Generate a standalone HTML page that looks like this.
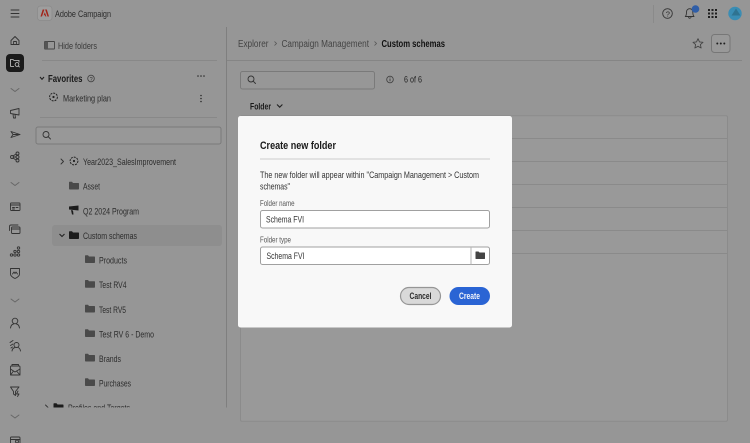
<!DOCTYPE html>
<html><head><meta charset="utf-8"><style>
html,body{margin:0;padding:0;background:#969696;width:750px;height:443px;overflow:hidden}
svg{display:block;filter:blur(.35px)}
text{font-family:"Liberation Sans",sans-serif;font-size:9.500px;fill:#2c2c2c}
.b{font-weight:bold;fill:#1a1a1a}
.i{fill:none;stroke:#333;stroke-width:.9;stroke-linecap:round;stroke-linejoin:round}
.f{fill:#4a4a4a}
.d{fill:#1c1c1c}
</style></head><body>
<svg width="750" height="443" viewBox="0 0 750 443" xmlns="http://www.w3.org/2000/svg">
<defs>
<path id="fo" d="M0 1Q0 .3.7.3H3L4 1.500H9.300Q10 1.500 10 2.200V7.300Q10 8 9.300 8H.7Q0 8 0 7.300Z"/>
<clipPath id="cl"><rect x="30" y="120" width="196" height="287.500"/></clipPath>
</defs>
<rect width="750" height="443" fill="#969696"/>

<!-- top bar -->
<path class="i" d="M11 10H19M11 13.500H19M11 17H19"/>
<rect x="37.500" y="6" width="14.500" height="14.500" rx="3" fill="#9e9e9e" stroke="#8a8a8a" stroke-width=".7"/>
<path d="M44.400 9.500H42.700L40.500 16.500H42ZM45.100 9.500H46.800L49 16.500H47.500ZM44.800 12.300L46.400 16.500H45.400L44.900 15.200H43.600Z" fill="#a3241a"/>
<text x="55" y="16.800" textLength="56" lengthAdjust="spacingAndGlyphs">Adobe Campaign</text>
<rect x="653" y="5" width="1" height="18" fill="#8a8a8a"/>
<circle class="i" cx="667.500" cy="13.500" r="4.800"/>
<text x="665.700" y="16.300" style="font-size:7.500px">?</text>
<path class="i" d="M685.300 16.500C686.500 15.500 686.500 14 686.500 12C686.500 10 688 8.700 689.700 8.700C691.400 8.700 692.800 10 692.800 12C692.800 14 693 15.500 694 16.500ZM688.500 17.500Q689.700 19 691 17.500"/>
<circle cx="695.500" cy="9" r="3.800" fill="#2f5ea8"/>
<g fill="#1f1f1f"><rect x="708" y="9" width="2" height="2"/><rect x="711.500" y="9" width="2" height="2"/><rect x="715" y="9" width="2" height="2"/><rect x="708" y="12.500" width="2" height="2"/><rect x="711.500" y="12.500" width="2" height="2"/><rect x="715" y="12.500" width="2" height="2"/><rect x="708" y="16" width="2" height="2"/><rect x="711.500" y="16" width="2" height="2"/><rect x="715" y="16" width="2" height="2"/></g>
<circle cx="735" cy="13.500" r="6.700" fill="#3a8db4"/>
<path d="M736 8.500L740.500 15.500H731.500Z" fill="#2f7391"/>

<!-- left nav -->
<path class="i" d="M11 40.500L15 36.500L19 40.500V44.500H11ZM13.600 44.500V41.500H16.400V44.500"/>
<rect x="6" y="54" width="18" height="18" rx="4" fill="#1b1b1b"/>
<path d="M10.500 66.500V59.500H13L14 60.500H19V62.500M10.500 66.500H14" fill="none" stroke="#cfcfcf" stroke-width=".8"/>
<circle cx="17" cy="64.500" r="1.900" fill="none" stroke="#cfcfcf" stroke-width=".8"/><path d="M18.400 66L19.600 67.200" stroke="#cfcfcf" stroke-width=".8"/>
<path class="i" style="stroke:#666" d="M11 88.500L15 91.500L19 88.500"/>
<path class="i" d="M10.500 110.500L19 108.500V115L10.500 113.500ZM13 114L13.500 118H15.500L15 114.500"/>
<path class="i" d="M11 131.500L20 134.500L11 137.500L13 134.500ZM13 134.500H20"/>
<g class="i"><circle cx="12" cy="157" r="1.500"/><circle cx="17.500" cy="153.500" r="1.500"/><circle cx="17.500" cy="157" r="1.500"/><circle cx="17.500" cy="160.500" r="1.500"/><path d="M13.500 157H16M13 156L16 154M13 158L16 160"/></g>
<path class="i" style="stroke:#666" d="M11 182.500L15 185.500L19 182.500"/>
<g class="i"><rect x="10.500" y="203" width="9.500" height="7.500" rx=".7"/><path d="M10.500 205H20M12.500 207.500H14.500M16 207.500H18M12.500 209H14.500"/></g>
<g class="i"><rect x="11.500" y="227" width="8.500" height="6.500" rx="1"/><path d="M9.500 230.500V226.500Q9.500 225 11 225H18M11.500 229H20"/></g>
<g class="i"><circle cx="11.500" cy="255" r="1.200"/><circle cx="15" cy="255" r="1.200"/><circle cx="18.500" cy="255" r="1.200"/><circle cx="15" cy="251.500" r="1.200"/><circle cx="18.500" cy="251.500" r="1.200"/><circle cx="18.500" cy="248" r="1.200"/></g>
<path class="i" d="M10.500 268.500H19.500V274Q19.500 276.500 15 278.500Q10.500 276.500 10.500 274ZM12.500 274L14 272L15 273.500L16 272L17.500 274"/>
<path class="i" style="stroke:#666" d="M11 299L15 302L19 299"/>
<g class="i"><circle cx="15" cy="321" r="2.800"/><path d="M10.500 328Q11 324.500 13.500 324M19.500 328Q19 324.500 16.500 324"/></g>
<g class="i"><circle cx="16.500" cy="345" r="2.500"/><path d="M12 351Q12.500 348 15 347.500M20.500 351Q20 348 18 347.500M10 342.500L13 340.500M10.500 345.500L13 344M11 348L12.500 347"/></g>
<g class="i"><rect x="10.500" y="366" width="9.500" height="9" rx="1"/><path d="M10.500 369L15 372L20 369M10.500 375L13.500 371M20 375L16.500 371M12 366V364.500H18.500V366"/></g>
<g class="i"><path d="M10.500 387H19L15.500 391.500V395.500L13.500 394V391.500Z"/><path d="M18 391L16.500 394H19L17.500 396.500"/></g>
<path class="i" style="stroke:#666" d="M11 415L15 418L19 415"/>
<g class="i"><rect x="10.500" y="437" width="9.500" height="9" rx="1"/><path d="M10.500 439.500H20"/><circle cx="17" cy="441.500" r="1.500"/></g>

<!-- folder column -->
<rect x="44.500" y="41.500" width="10" height="7.500" rx=".5" fill="none" stroke="#444" stroke-width=".9"/><rect x="44.500" y="41.500" width="3.500" height="7.500" fill="#555"/>
<text x="58" y="48.800" textLength="39" lengthAdjust="spacingAndGlyphs" style="fill:#3a3a3a">Hide folders</text>
<rect x="42" y="60" width="175" height="1" fill="#888"/>
<path d="M40 77L42 79.300L44 77" fill="none" stroke="#1f1f1f" stroke-width="1.100"/>
<text class="b" x="48" y="81.800" textLength="34.500" lengthAdjust="spacingAndGlyphs" style="font-size:10px">Favorites</text>
<circle class="i" style="stroke:#444" cx="91" cy="78.500" r="3.300"/>
<text x="89.600" y="80.800" style="font-size:5.500px">?</text>
<g fill="#2b2b2b"><circle cx="198" cy="76" r=".8"/><circle cx="201" cy="76" r=".8"/><circle cx="204" cy="76" r=".8"/></g>
<circle cx="53.500" cy="97" r="3.900" fill="none" stroke="#222" stroke-width="1" stroke-dasharray="2 1"/><circle cx="53.500" cy="97" r="1.100" fill="#222"/>
<text x="63" y="101.300" textLength="48" lengthAdjust="spacingAndGlyphs">Marketing plan</text>
<g fill="#2b2b2b"><circle cx="201" cy="95.500" r=".8"/><circle cx="201" cy="98.500" r=".8"/><circle cx="201" cy="101.500" r=".8"/></g>
<rect x="40" y="117" width="177" height="1" fill="#888"/>

<rect x="36" y="127" width="185" height="17" rx="2" fill="#989898" stroke="#7a7a7a" stroke-width="1"/>
<circle class="i" cx="46" cy="134.500" r="3"/><path class="i" d="M48.200 136.700L50.500 139"/>

<g clip-path="url(#cl)">
<rect x="52" y="225" width="170" height="21" rx="3" fill="#8e8e8e"/>
<path class="i" d="M61 159L63.500 161.500L61 164"/>
<circle cx="74" cy="161" r="3.900" fill="none" stroke="#222" stroke-width="1" stroke-dasharray="2 1"/><circle cx="74" cy="161" r="1.100" fill="#222"/>
<text x="83" y="165" textLength="93" lengthAdjust="spacingAndGlyphs">Year2023_SalesImprovement</text>
<use href="#fo" class="f" x="69" y="181.500"/>
<text x="83" y="189.500" textLength="17" lengthAdjust="spacingAndGlyphs">Asset</text>
<path class="d" d="M69 206.500L78.500 205.500V210.500L69 209.500ZM71 210L72 214.500H73.500L73 210.500Z"/>
<text x="83" y="214.300" textLength="56" lengthAdjust="spacingAndGlyphs">Q2 2024 Program</text>
<path d="M59.500 234L62 236.500L64.500 234" fill="none" stroke="#222" stroke-width="1.100"/>
<use href="#fo" class="d" x="69" y="231"/>
<text x="83" y="239" textLength="54" lengthAdjust="spacingAndGlyphs">Custom schemas</text>
<use href="#fo" class="f" x="85" y="255"/>
<text x="99" y="263.500" textLength="28" lengthAdjust="spacingAndGlyphs">Products</text>
<use href="#fo" class="f" x="85" y="279.700"/>
<text x="99" y="288" textLength="27.500" lengthAdjust="spacingAndGlyphs">Test RV4</text>
<use href="#fo" class="f" x="85" y="304.500"/>
<text x="99" y="313" textLength="27" lengthAdjust="spacingAndGlyphs">Test RV5</text>
<use href="#fo" class="f" x="85" y="329"/>
<text x="99" y="337.500" textLength="55" lengthAdjust="spacingAndGlyphs">Test RV 6 - Demo</text>
<use href="#fo" class="f" x="85" y="353.500"/>
<text x="99" y="362" textLength="22" lengthAdjust="spacingAndGlyphs">Brands</text>
<use href="#fo" class="f" x="85" y="378"/>
<text x="99" y="386.500" textLength="32" lengthAdjust="spacingAndGlyphs">Purchases</text>
<path class="i" d="M45.500 405L48 407.500L45.500 410"/>
<use href="#fo" class="d" x="53.500" y="403"/>
<text x="68" y="411" textLength="62" lengthAdjust="spacingAndGlyphs">Profiles and Targets</text>
</g>
<rect x="226" y="27" width="1" height="380.500" fill="#7f7f7f"/>

<!-- content -->
<rect x="227" y="60" width="515" height="1" fill="#858585"/>
<text x="238" y="47" textLength="30.500" lengthAdjust="spacingAndGlyphs" style="fill:#444;font-size:10px">Explorer</text>
<path d="M274.500 41.500L276.500 43.500L274.500 45.500" fill="none" stroke="#555" stroke-width=".8"/>
<text x="281.500" y="47" textLength="87.500" lengthAdjust="spacingAndGlyphs" style="fill:#444;font-size:10px">Campaign Management</text>
<path d="M374.500 41.500L376.500 43.500L374.500 45.500" fill="none" stroke="#555" stroke-width=".8"/>
<text class="b" x="381.500" y="47" textLength="63.500" lengthAdjust="spacingAndGlyphs" style="font-size:10px;fill:#111">Custom schemas</text>
<path class="i" style="stroke:#444" d="M698 38.700L699.500 41.900L703 42.300L700.400 44.600L701.100 48L698 46.300L694.900 48L695.600 44.600L693 42.300L696.500 41.900Z"/>
<rect x="711.500" y="34.500" width="18.500" height="18" rx="3" fill="#999" stroke="#777" stroke-width="1"/>
<g fill="#1f1f1f"><circle cx="717.300" cy="43.500" r="1"/><circle cx="720.800" cy="43.500" r="1"/><circle cx="724.300" cy="43.500" r="1"/></g>
<rect x="240.500" y="71.500" width="134" height="17.500" rx="2" fill="#979797" stroke="#7a7a7a" stroke-width="1"/>
<circle class="i" cx="251" cy="79" r="3"/><path class="i" d="M253.200 81.200L255.500 83.500"/>
<circle class="i" style="stroke:#444" cx="390" cy="79.500" r="3.300"/><path d="M390 78.500V81.300" stroke="#333" stroke-width=".8"/><circle cx="390" cy="77.500" r=".4" fill="#333"/>
<text x="404" y="82.500" textLength="18" lengthAdjust="spacingAndGlyphs" style="fill:#222">6 of 6</text>
<text class="b" x="250" y="109.500" textLength="21" lengthAdjust="spacingAndGlyphs">Folder</text>
<path d="M277 104.500L279.700 107.200L282.400 104.500" fill="none" stroke="#222" stroke-width="1.100"/>

<rect x="240.500" y="115.800" width="487" height="305.400" rx="1.500" fill="#999" stroke="#8b8b8b" stroke-width="1"/>
<g fill="#8a8a8a"><rect x="241" y="138" width="486" height="1"/><rect x="241" y="161" width="486" height="1"/><rect x="241" y="184" width="486" height="1"/><rect x="241" y="207" width="486" height="1"/><rect x="241" y="230" width="486" height="1"/><rect x="241" y="253" width="486" height="1"/></g>

<!-- modal -->
<rect x="238" y="116" width="274" height="211.500" rx="2.500" fill="#f8f8f8"/>
<text class="b" x="260" y="148.800" textLength="76" lengthAdjust="spacingAndGlyphs" style="font-size:11px;fill:#1a1a1a">Create new folder</text>
<rect x="260" y="158" width="230" height="2" fill="#e2e2e2"/>
<text x="260" y="177.800" textLength="219" lengthAdjust="spacingAndGlyphs" style="fill:#333">The new folder will appear within "Campaign Management &gt; Custom</text>
<text x="260" y="189.300" textLength="30" lengthAdjust="spacingAndGlyphs" style="fill:#333">schemas"</text>
<text x="260" y="206" textLength="34.500" lengthAdjust="spacingAndGlyphs" style="font-size:8.500px;fill:#555">Folder name</text>
<rect x="260.500" y="210.500" width="229" height="17.500" rx="2" fill="#fff" stroke="#a0a0a0" stroke-width="1"/>
<text x="266" y="222.300" textLength="38" lengthAdjust="spacingAndGlyphs" style="fill:#333">Schema FVI</text>
<text x="260" y="242.500" textLength="31" lengthAdjust="spacingAndGlyphs" style="font-size:8.500px;fill:#555">Folder type</text>
<rect x="260.500" y="247" width="229" height="17.500" rx="2" fill="#fff" stroke="#a0a0a0" stroke-width="1"/>
<rect x="470.500" y="247" width="1" height="17.500" fill="#b5b5b5"/>
<text x="266.500" y="258.800" textLength="38" lengthAdjust="spacingAndGlyphs" style="fill:#333">Schema FVI</text>
<path fill="#444" d="M475.500 252Q475.500 251.500 476 251.500H478.500L479.500 252.500H484.500Q485 252.500 485 253V258.500Q485 259 484.500 259H476Q475.500 259 475.500 258.500Z"/>
<rect x="400.500" y="287.500" width="40" height="17" rx="8.500" fill="#d9d9d9" stroke="#969696" stroke-width="1.200"/>
<text class="b" x="409.500" y="299" textLength="22" lengthAdjust="spacingAndGlyphs" style="fill:#2a2a2a">Cancel</text>
<rect x="449.500" y="287" width="40.500" height="18" rx="9" fill="#2a64d4"/>
<text class="b" x="459" y="299" textLength="21" lengthAdjust="spacingAndGlyphs" style="fill:#f4f6fb">Create</text>
</svg>
</body></html>
